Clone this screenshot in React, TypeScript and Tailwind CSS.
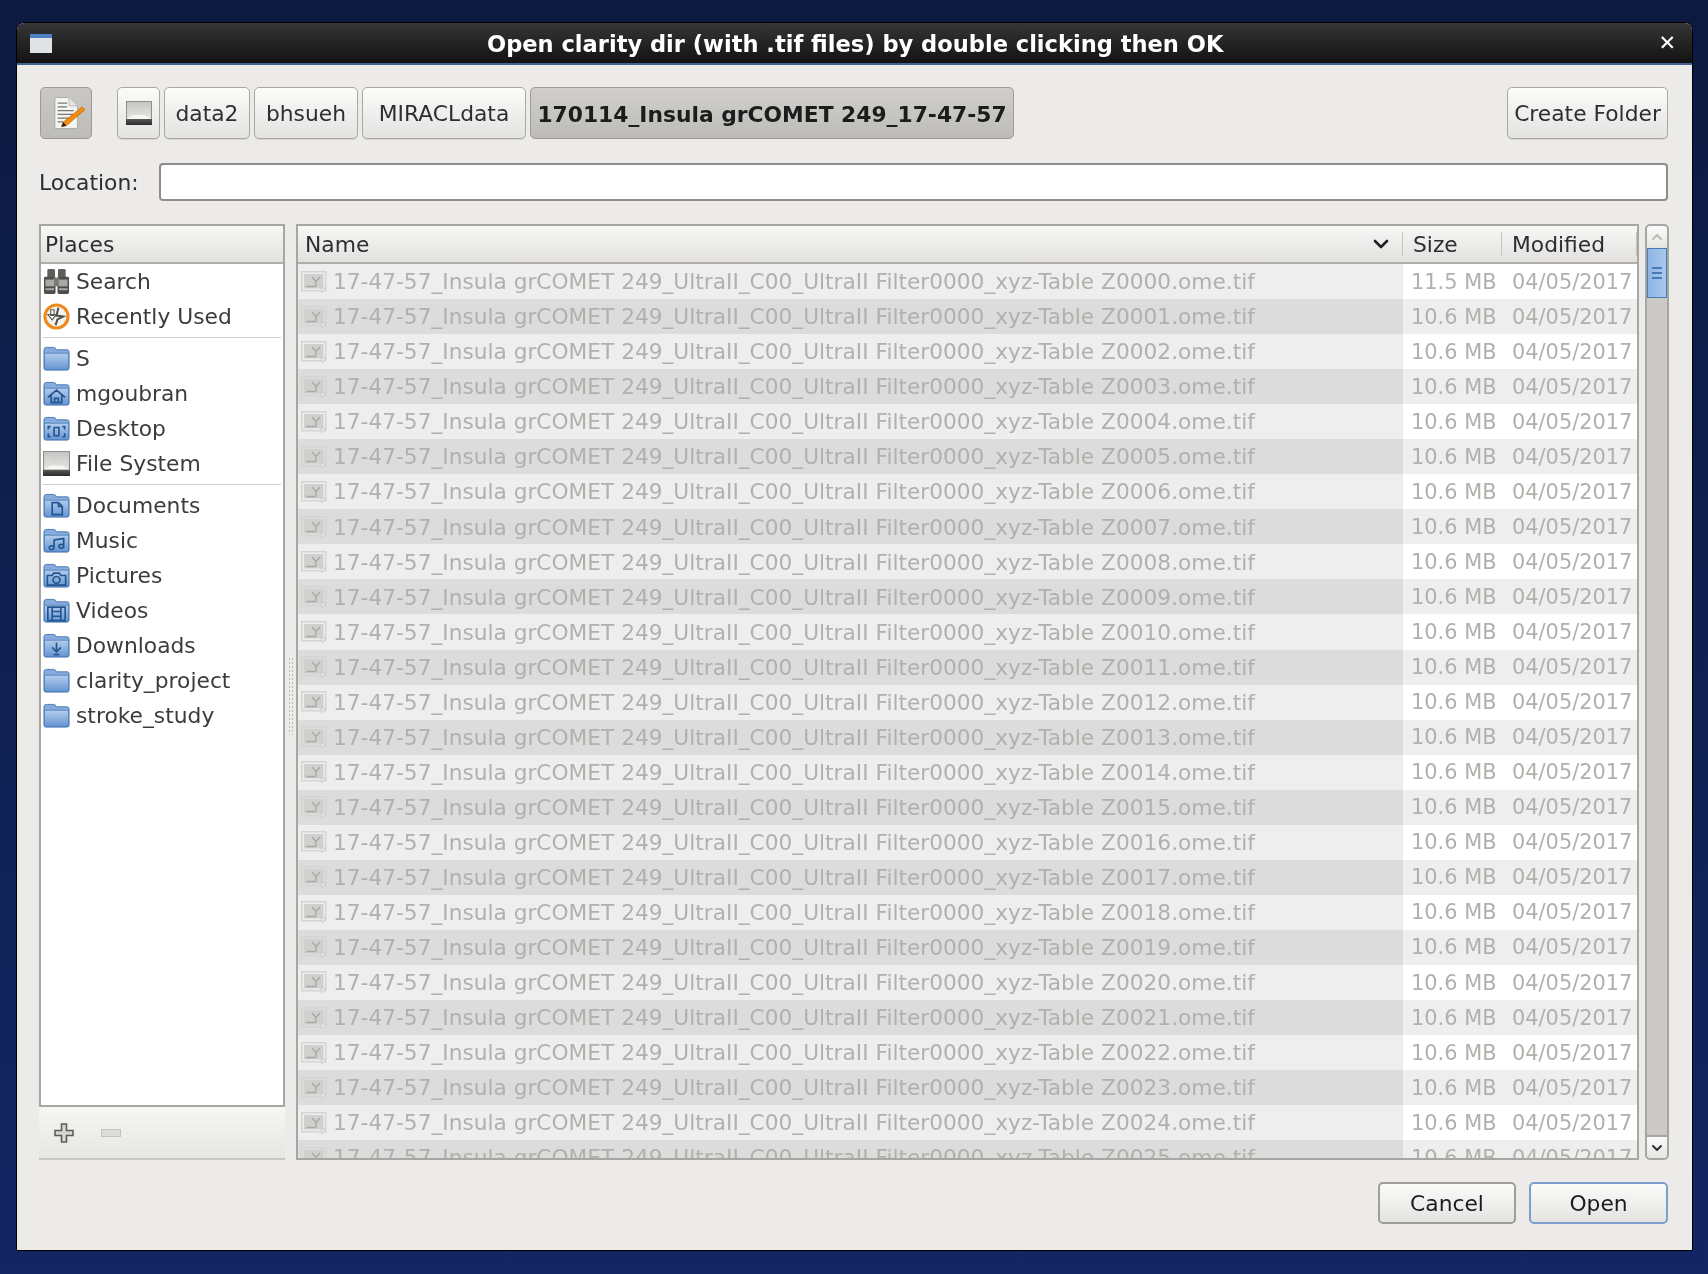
import React from "react"
import { ChevronDown, ChevronUp } from "lucide-react"

const FONT = { fontFamily: '"DejaVu Sans", sans-serif' }

const files = Array.from({ length: 26 }, (_, i) => ({
  name: `17-47-57_Insula grCOMET 249_UltraII_C00_UltraII Filter0000_xyz-Table Z${String(i).padStart(4, "0")}.ome.tif`,
  size: i === 0 ? "11.5 MB" : "10.6 MB",
}))

function FolderIcon({ glyph }: { glyph?: React.ReactNode }) {
  return (
    <svg viewBox="0 0 28 28" className="w-[27px] h-[27px] shrink-0">
      <defs>
        <linearGradient id="folderFill" x1="0" y1="0" x2="0" y2="1">
          <stop offset="0" stopColor="#b4cdec" />
          <stop offset="1" stopColor="#6595d3" />
        </linearGradient>
      </defs>
      <path d="M1 5 Q1 2.5 3.5 2.5 H11 Q13 2.5 14 5 H25 Q27 5 27 7 V24 Q27 26 25 26 H3 Q1 26 1 24 Z" fill="#86abdc" stroke="#4a7ab5" strokeWidth="1" />
      <path d="M1.5 8.5 H26.5 V24 Q26.5 25.5 25 25.5 H3 Q1.5 25.5 1.5 24 Z" fill="url(#folderFill)" stroke="#4a7ab5" strokeWidth="0.8" />
      {glyph}
    </svg>
  )
}

const g = { fill: "none", stroke: "#24558f", strokeWidth: 1.7 }

const glyphs: Record<string, React.ReactNode> = {
  home: <path d="M5 18 L14 10.5 L23 18 M8.5 15.5 V23.5 H19.5 V15.5 M12 23.5 V19 H16 V23.5" {...g} />,
  desktop: <path d="M8 12 H5.5 V15 M20 12 H22.5 V15 M5.5 19 V22.5 H8 M22.5 19 V22.5 H20 M11.5 13 H16.5 V21.5 H11.5 Z" {...g} />,
  docs: <path d="M9.5 11 H16 L20 15 V23.5 H9.5 Z M16 11 V15 H20" {...g} />,
  music: <path d="M11.5 21.5 a2.5 2 0 1 1 -5 0 a2.5 2 0 1 1 5 0 V13.5 L21.5 12 V20 a2.5 2 0 1 1 -5 0 a2.5 2 0 1 1 5 0" {...g} />,
  pictures: <path d="M4.5 14 H9.5 L11 11.5 H17 L18.5 14 H23.5 V24 H4.5 Z M14 15 a3.6 3.6 0 1 0 0.01 0" {...g} />,
  videos: <path d="M5 10.5 H23 V24.5 H5 Z M9.5 10.5 V24.5 M18.5 10.5 V24.5 M9.5 15 H18.5 M9.5 20 H18.5" {...g} />,
  downloads: <path d="M14 11 V19.5 M9.5 16 L14 20.5 L18.5 16 M11 23.5 H17" {...g} />,
}

function DriveIcon({ className }: { className: string }) {
  return (
    <svg viewBox="0 0 26 24" className={className}>
      <defs>
        <linearGradient id="driveFill" x1="0" y1="0" x2="0" y2="1">
          <stop offset="0" stopColor="#c4c5c3" />
          <stop offset="1" stopColor="#f0f0ee" />
        </linearGradient>
        <linearGradient id="driveBase" x1="0" y1="0" x2="0" y2="1">
          <stop offset="0" stopColor="#5a5a59" />
          <stop offset="1" stopColor="#2a2a2a" />
        </linearGradient>
      </defs>
      <rect x="0.5" y="0.5" width="25" height="23" fill="url(#driveFill)" stroke="#8d8d8a" />
      <path d="M1 18 L7 14 H19 L25 18 Z" fill="#f6f6f4" />
      <path d="M3 6 L8 13 M23 6 L18 13" stroke="#dededc" strokeWidth="1" />
      <rect x="0" y="18" width="26" height="6" fill="url(#driveBase)" />
    </svg>
  )
}

function SearchIcon() {
  return (
    <svg viewBox="0 0 28 28" className="w-[27px] h-[27px] shrink-0">
      <rect x="4.5" y="1" width="8" height="9" rx="1.5" fill="#5e5f5b" />
      <rect x="15.5" y="1" width="8" height="9" rx="1.5" fill="#5e5f5b" />
      <rect x="1" y="9" width="12" height="18" rx="1.5" fill="#4e4f4c" />
      <rect x="15" y="9" width="12" height="18" rx="1.5" fill="#4e4f4c" />
      <rect x="11" y="10" width="6" height="9" fill="#7a7a75" />
      <rect x="2.5" y="12" width="9" height="7" fill="#a8a8a4" />
      <rect x="16.5" y="12" width="9" height="7" fill="#a8a8a4" />
      <rect x="2.5" y="21" width="9" height="2" fill="#a8a8a4" />
      <rect x="16.5" y="21" width="9" height="2" fill="#a8a8a4" />
    </svg>
  )
}

function RecentIcon() {
  return (
    <svg viewBox="0 0 28 28" className="w-[27px] h-[27px] shrink-0">
      <circle cx="14" cy="14" r="12" fill="#f3f2ee" stroke="#ee8a1c" strokeWidth="3.2" />
      <path d="M5 12 L9.5 17.5 L14 12 Z M8 7 H11.5 V13 H8 Z" fill="#f9f9f7" stroke="#5a5a58" strokeWidth="1.1" />
      <path d="M16 5 L14 13 L21 14 L15 17 L13 23" fill="none" stroke="#4f4f4d" strokeWidth="2.1" />
    </svg>
  )
}

function FileIcon() {
  return (
    <svg viewBox="0 0 26 22" className="w-[26px] h-[22px] shrink-0">
      <rect x="0.75" y="0.75" width="24" height="19" fill="none" stroke="#d4d4d2" strokeWidth="1.5" />
      <rect x="3" y="3" width="19.5" height="14.5" fill="#d0d0ce" />
      <path d="M5 15.5 H15 M11 6 L15 10.5 L19 6 M15 10.5 V15.5" fill="none" stroke="#a9a9a6" strokeWidth="1.4" />
      <path d="M20 17 L25 17 L21 22 Z" fill="#ececea" stroke="#c6c6c4" strokeWidth="0.8" />
    </svg>
  )
}

function EditIcon() {
  return (
    <svg viewBox="0 0 34 36" className="w-[32px] h-[35px] ml-[6px]">
      <path d="M2 1 H17 L26 10 V34 H2 Z" fill="#f4f4f2" stroke="#a9a9a6" />
      <path d="M17 1 V10 H26" fill="#e3e3e0" stroke="#b9b9b6" />
      <path d="M5 7 H15 M5 11 H15 M5 15 H22 M5 19 H22 M5 23 H17 M5 27 H11" stroke="#77777a" strokeWidth="1.3" />
      <path d="M31 11 L34 14 L14 31 L9 32 L11 27 Z" fill="#f28c12" stroke="#c86a00" strokeWidth="0.8" />
      <path d="M9 32 L11 27 L14 31 Z" fill="#222" />
    </svg>
  )
}

function PathButton({ children, className = "" }: { children: React.ReactNode; className?: string }) {
  return (
    <button className={`h-[52px] flex items-center justify-center rounded-[5px] border border-[#a9a7a2] bg-gradient-to-b from-[#fbfbfa] to-[#e4e3e1] shadow-[0_1px_0_#d5d4d1] ${className}`}>
      {children}
    </button>
  )
}

function PlaceRow({ icon, label }: { icon: React.ReactNode; label: string }) {
  return (
    <div className="h-[35px] flex items-center gap-[6px] pl-[2px] text-[#3c3c3c]">
      {icon}
      <span className="pt-[1px]">{label}</span>
    </div>
  )
}

function PlaceSep() {
  return (
    <div className="h-[7px] flex items-center px-[2px]">
      <div className="h-px w-full bg-[#d0cfcc]" />
    </div>
  )
}

export default function App() {
  return (
    <div
      style={FONT}
      className="w-[1708px] h-[1274px] overflow-hidden flex flex-col px-[16px] pt-[22px] bg-gradient-to-b from-[#0c1a40] to-[#132663] text-[21.8px] leading-none"
    >
      <div className="w-[1677px] h-[1229px] flex flex-col rounded-t-[8px] border border-black bg-[#ecebe9] shrink-0 blur-[0.5px]">
        {/* title bar */}
        <div className="h-[42px] shrink-0 flex items-center justify-between pl-[13px] pr-[16px] rounded-t-[7px] border-b-2 border-[#42628f] bg-gradient-to-b from-[#363636] to-[#131313]">
          <div className="w-[22px] h-[19px] bg-[#dfe3e6] border-t-[4px] border-[#4f7fc0]" />
          <span className="font-bold text-white text-[22.55px] pt-[2px]">Open clarity dir (with .tif files) by double clicking then OK</span>
          <span className="text-white font-bold text-[21px]">✕</span>
        </div>

        <div className="flex-1 min-h-0 flex flex-col pl-[22px] pr-[24px] pt-[22px]">
          {/* path bar */}
          <div className="h-[52px] shrink-0 flex items-center">
            <button className="w-[52px] h-[52px] ml-[1px] flex items-center justify-center rounded-[5px] border border-[#9c9a96] bg-gradient-to-b from-[#c9c8c5] to-[#bdbcb9]">
              <EditIcon />
            </button>
            <PathButton className="w-[43px] ml-[25px]">
              <DriveIcon className="w-[26px] h-[24px]" />
            </PathButton>
            <PathButton className="w-[86px] ml-[4px] pt-[2px] text-[#2e2e2e]">data2</PathButton>
            <PathButton className="w-[104px] ml-[4px] pt-[2px] text-[#2e2e2e]">bhsueh</PathButton>
            <PathButton className="w-[164px] ml-[4px] pt-[2px] text-[#2e2e2e]">MIRACLdata</PathButton>
            <button className="w-[484px] ml-[4px] h-[52px] pt-[4px] flex items-center justify-center rounded-[5px] border border-[#9c9a96] bg-gradient-to-b from-[#d0cfcc] to-[#bdbcb9] font-bold text-[#1c1c1c]">
              170114_Insula grCOMET 249_17-47-57
            </button>
            <PathButton className="w-[161px] ml-auto pt-[2px] text-[#2e2e2e]">Create Folder</PathButton>
          </div>

          {/* location */}
          <div className="h-[38px] mt-[24px] shrink-0 flex items-center">
            <label className="w-[120px] pt-[2px] text-[#2e2e2e]">Location:</label>
            <input className="flex-1 h-[38px] rounded-[4px] border-2 border-[#8f8d89] bg-white" />
          </div>

          {/* panes */}
          <div className="h-[936px] mt-[23px] shrink-0 flex">
            <div className="w-[246px] shrink-0 flex flex-col">
              <div className="flex-1 min-h-0 flex flex-col border-2 border-[#a8a6a1] bg-white">
                <div className="h-[38px] shrink-0 flex items-center pl-[4px] pt-[2px] border-b-2 border-[#b0aeaa] bg-gradient-to-b from-[#f7f7f6] to-[#e2e1df] text-[#2e2e2e]">Places</div>
                <PlaceRow icon={<SearchIcon />} label="Search" />
                <PlaceRow icon={<RecentIcon />} label="Recently Used" />
                <PlaceSep />
                <PlaceRow icon={<FolderIcon />} label="S" />
                <PlaceRow icon={<FolderIcon glyph={glyphs.home} />} label="mgoubran" />
                <PlaceRow icon={<FolderIcon glyph={glyphs.desktop} />} label="Desktop" />
                <PlaceRow icon={<DriveIcon className="w-[27px] h-[25px] shrink-0" />} label="File System" />
                <PlaceSep />
                <PlaceRow icon={<FolderIcon glyph={glyphs.docs} />} label="Documents" />
                <PlaceRow icon={<FolderIcon glyph={glyphs.music} />} label="Music" />
                <PlaceRow icon={<FolderIcon glyph={glyphs.pictures} />} label="Pictures" />
                <PlaceRow icon={<FolderIcon glyph={glyphs.videos} />} label="Videos" />
                <PlaceRow icon={<FolderIcon glyph={glyphs.downloads} />} label="Downloads" />
                <PlaceRow icon={<FolderIcon />} label="clarity_project" />
                <PlaceRow icon={<FolderIcon />} label="stroke_study" />
              </div>
              <div className="h-[53px] shrink-0 flex items-center gap-[27px] pl-[15px] border-b-2 border-[#c9c7c3] bg-gradient-to-b from-[#f6f6f5] to-[#e7e6e4]">
                <svg viewBox="0 0 20 20" className="w-5 h-5"><path d="M7.5 1 H12.5 V7.5 H19 V12.5 H12.5 V19 H7.5 V12.5 H1 V7.5 H7.5 Z" fill="#d6d6d4" stroke="#5d5d5b" strokeWidth="1.6" /></svg>
                <svg viewBox="0 0 20 8" className="w-5 h-2"><rect x="0.5" y="0.5" width="19" height="7" fill="#dcdcda" stroke="#c2c2c0" /></svg>
              </div>
            </div>

            {/* pane grip */}
            <div className="w-[11px] shrink-0 flex items-center justify-center">
              <div className="w-[6px] h-[78px] mt-[8px] bg-[radial-gradient(#bdbcb8_1px,transparent_1px)] bg-[length:3px_4px]" />
            </div>

            <div className="w-[1343px] shrink-0 flex flex-col border-2 border-[#a8a6a1] overflow-hidden bg-white">
              <div className="h-[38px] shrink-0 flex items-stretch border-b-2 border-[#b0aeaa] bg-gradient-to-b from-[#f7f7f6] to-[#e2e1df] text-[#2e2e2e]">
                <div className="w-[1104px] shrink-0 flex items-center justify-between pl-[7px] pr-[9px]">
                  <span className="pt-[2px]">Name</span>
                  <ChevronDown className="w-[24px] h-[24px] text-[#222]" strokeWidth={2.6} />
                </div>
                <div className="w-[99px] shrink-0 flex items-center pl-[10px] pt-[2px] my-[6px] border-l border-[#c5c4c0]">Size</div>
                <div className="flex-1 flex items-center pl-[10px] pt-[2px] my-[6px] border-l border-r border-[#c5c4c0]">Modified</div>
              </div>
              {files.map((f, i) => (
                <div key={f.name} className={`h-[35.05px] shrink-0 flex items-center text-[#b2b0ac] ${i % 2 ? "bg-[#eeeeee]" : "bg-white"}`}>
                  <div className={`w-[1105px] shrink-0 h-full flex items-center gap-[6px] pl-[3px] text-[21.7px] ${i % 2 ? "bg-[#dcdcdc]" : "bg-[#eeeeee]"}`}>
                    <FileIcon />
                    <span className="whitespace-nowrap pt-[1px]">{f.name}</span>
                  </div>
                  <div className="w-[100px] shrink-0 pl-[8px] whitespace-nowrap text-[20.9px] pt-[1px]">{f.size}</div>
                  <div className="pl-[9px] whitespace-nowrap text-[20.9px] pt-[1px]">04/05/2017</div>
                </div>
              ))}
            </div>

            {/* scrollbar */}
            <div className="w-[24px] ml-[6px] shrink-0 flex flex-col rounded-[5px] border-2 border-[#a8a6a1] bg-[#cbcac7] overflow-hidden">
              <div className="h-[22px] shrink-0 flex items-center justify-center bg-gradient-to-b from-[#fafafa] to-[#e6e5e3]">
                <ChevronUp className="w-4 h-4 text-[#bdbcb9]" strokeWidth={3} />
              </div>
              <div className="h-[50px] shrink-0 flex flex-col items-center justify-center gap-[3px] border border-[#4a7ab5] bg-gradient-to-r from-[#8fb5e4] to-[#a9c8ee]">
                <div className="w-[10px] h-[2px] bg-[#4a7ab5]" />
                <div className="w-[10px] h-[2px] bg-[#4a7ab5]" />
                <div className="w-[10px] h-[2px] bg-[#4a7ab5]" />
              </div>
              <div className="flex-1" />
              <div className="h-[23px] shrink-0 flex items-center justify-center border-t-2 border-[#a8a6a1] bg-gradient-to-b from-[#fafafa] to-[#e6e5e3]">
                <ChevronDown className="w-4 h-4 text-[#333]" strokeWidth={3} />
              </div>
            </div>
          </div>

          {/* actions */}
          <div className="mt-[22px] flex justify-end gap-[13px]">
            <button className="w-[138px] h-[42px] pt-[2px] rounded-[5px] border-2 border-[#a09e9a] bg-gradient-to-b from-[#fbfbfa] to-[#e4e3e1] text-[#1c1c1c]">Cancel</button>
            <button className="w-[139px] h-[42px] pt-[2px] rounded-[5px] border-2 border-[#7b9fcd] bg-gradient-to-b from-[#fbfbfa] to-[#e4e3e1] text-[#1c1c1c]">Open</button>
          </div>
        </div>
      </div>
    </div>
  )
}
